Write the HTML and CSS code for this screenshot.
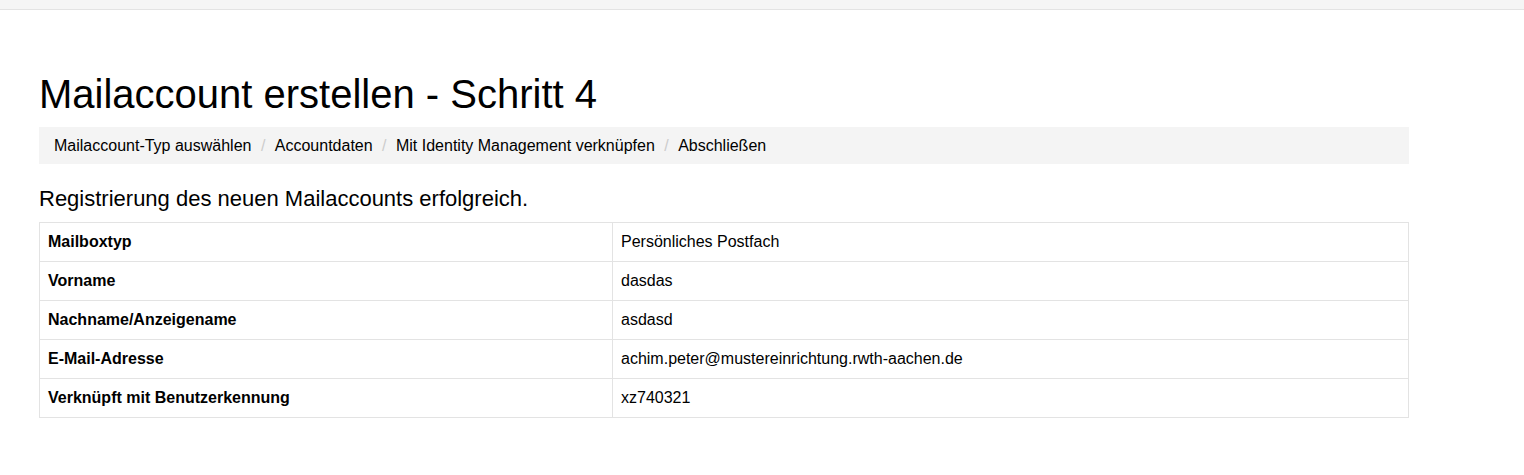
FILE: index.html
```html
<!DOCTYPE html>
<html lang="de">
<head>
    <meta charset="UTF-8">
    <meta name="viewport" content="width=device-width, initial-scale=1.0">
    <title>Mailaccount erstellen - Schritt 4</title>
    <link rel="stylesheet" href="styles.css">
</head>
<body>
    <div class="topbar"></div>

    <div class="container">
        <h1>Mailaccount erstellen - Schritt 4</h1>

        <ol class="breadcrumb">
            <li>Mailaccount-Typ auswählen</li>
            <li>Accountdaten</li>
            <li>Mit Identity Management verknüpfen</li>
            <li>Abschließen</li>
        </ol>

        <h3>Registrierung des neuen Mailaccounts erfolgreich.</h3>

        <table class="summary">
            <tr>
                <th>Mailboxtyp</th>
                <td>Persönliches Postfach</td>
            </tr>
            <tr>
                <th>Vorname</th>
                <td>dasdas</td>
            </tr>
            <tr>
                <th>Nachname/Anzeigename</th>
                <td>asdasd</td>
            </tr>
            <tr>
                <th>E-Mail-Adresse</th>
                <td>achim.peter@mustereinrichtung.rwth-aachen.de</td>
            </tr>
            <tr>
                <th>Verknüpft mit Benutzerkennung</th>
                <td>xz740321</td>
            </tr>
        </table>
    </div>
</body>
</html>
```

FILE: styles.css
```css
body {
    font-family: "Liberation Sans", Arial, sans-serif;
    font-size: 16px;
    color: #000;
    margin: 0;
    background-color: #fff;
}

.topbar {
    height: 9px;
    background-color: #f5f5f5;
    border-bottom: 1px solid #e3e3e3;
}

.container {
    width: 1370px;
    margin-left: 39px;
}

h1 {
    font-size: 40px;
    font-weight: normal;
    line-height: 44px;
    margin: 62px 0 11px;
}

.breadcrumb {
    list-style: none;
    margin: 0;
    padding: 8px 15px;
    line-height: 21px;
    background-color: #f4f4f4;
}

.breadcrumb li {
    display: inline;
}

.breadcrumb li + li:before {
    content: "/\00a0";
    padding: 0 5px;
    color: #ccc;
}

h3 {
    font-size: 22px;
    font-weight: normal;
    line-height: 24px;
    margin: 23px 0 11px;
}

.summary {
    width: 100%;
    border-collapse: collapse;
    border: 1px solid #e3e3e3;
}

.summary th,
.summary td {
    border: 1px solid #e3e3e3;
    padding: 8px;
    line-height: 22px;
    text-align: left;
    vertical-align: top;
}

.summary th {
    width: 556px;
    font-weight: bold;
}
```
